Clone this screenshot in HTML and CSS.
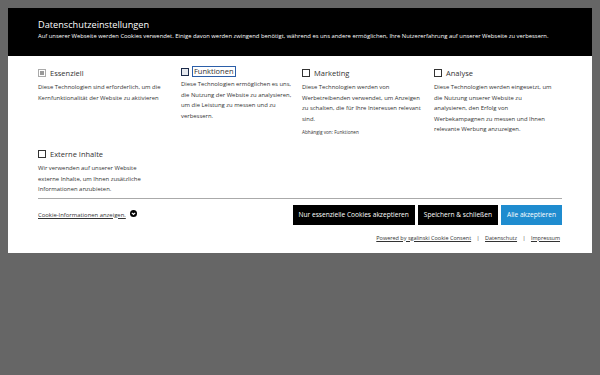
FILE: index.html
```html
<!DOCTYPE html>
<html>
<head>
<meta name="viewport" content="width=device-width, initial-scale=1">
<link rel="stylesheet" href="styles.css">
</head>
<body>

<div class="consent">
  <div class="consent_head">
    <h2>Datenschutzeinstellungen</h2>
    <p>Auf unserer Webseite werden Cookies verwendet. Einige davon werden zwingend benötigt, während es uns andere ermöglichen, Ihre Nutzererfahrung auf unserer Webseite zu verbessern.</p>
  </div>

  <div class="consent_body">
    <div class="options">
      <div class="option">
        <label class="opt_label"><span class="box box_disabled"></span>Essenziell</label>
        <p>Diese Technologien sind erforderlich, um die Kernfunktionalität der Website zu aktivieren</p>
      </div>
      <div class="option">
        <label class="opt_label focus"><span class="box box_focus"></span><span class="outline">Funktionen</span></label>
        <p>Diese Technologien ermöglichen es uns, die Nutzung der Website zu analysieren, um die Leistung zu messen und zu verbessern.</p>
      </div>
      <div class="option">
        <label class="opt_label"><span class="box"></span>Marketing</label>
        <p>Diese Technologien werden von Werbetreibenden verwendet, um Anzeigen zu schalten, die für Ihre Interessen relevant sind.</p>
        <p class="depends">Abhängig von: Funktionen</p>
      </div>
      <div class="option">
        <label class="opt_label"><span class="box"></span>Analyse</label>
        <p>Diese Technologien werden eingesetzt, um die Nutzung unserer Website zu analysieren, den Erfolg von Werbekampagnen zu messen und Ihnen relevante Werbung anzuzeigen.</p>
      </div>
      <div class="option option_narrow">
        <label class="opt_label"><span class="box"></span>Externe Inhalte</label>
        <p>Wir verwenden auf unserer Website externe Inhalte, um Ihnen zusätzliche Informationen anzubieten.</p>
      </div>
    </div>

    <div class="consent_foot">
      <a class="details_link" href="#">Cookie-Informationen anzeigen.</a>
      <svg class="chevron" width="7" height="7" viewBox="0 0 14 14">
        <circle cx="7" cy="7" r="7" fill="#000"/>
        <path d="M3.6 5.6 L7 9 L10.4 5.6" fill="none" stroke="#fff" stroke-width="2.2"/>
      </svg>
      <div class="buttons">
        <button class="btn">Nur essenzielle Cookies akzeptieren</button>
        <button class="btn">Speichern &amp; schließen</button>
        <button class="btn btn_blue">Alle akzeptieren</button>
      </div>
    </div>

    <div class="links">
      <a href="#">Powered by sgalinski Cookie Consent</a>
      <span class="sep">|</span>
      <a href="#">Datenschutz</a>
      <span class="sep">|</span>
      <a href="#">Impressum</a>
    </div>
  </div>
</div>

</body>
</html>
```

FILE: styles.css
```css
html, body {
    margin: 0;
    height: 100%;
}

body {
    background-color: #666;
    font-family: "Open Sans", Arial, sans-serif;
    padding: 8px;
    box-sizing: border-box;
}

.consent {
    width: 584px;
    background-color: #fff;
}

.consent_head {
    background-color: #000;
    color: #fff;
    height: 48px;
    box-sizing: border-box;
    padding: 10px 30px 0;
}

.consent_head h2 {
    margin: 0;
    font-size: 9.2px;
    font-weight: normal;
    line-height: 13px;
}

.consent_head p {
    margin: 0;
    font-size: 5.85px;
    line-height: 10px;
}

.consent_body {
    padding: 11px 30px 11px;
}

.options {
    display: grid;
    grid-template-columns: 143px 121px 132px 1fr;
    row-gap: 12px;
    border-bottom: 1px solid #aaa;
    padding-bottom: 3px;
}

.option p {
    margin: 3px 0 0;
    font-size: 5.9px;
    line-height: 10.5px;
    color: #333;
    padding-right: 10px;
}

.option_narrow p {
    width: 104px;
    padding-right: 0;
}

.opt_label {
    display: flex;
    align-items: center;
    font-size: 7.5px;
    line-height: 12px;
    color: #333;
}

.box {
    width: 6px;
    height: 6px;
    border: 1px solid #333;
    margin-right: 4px;
}

.box_disabled {
    border-color: #aaa;
    background-color: #fff;
    box-shadow: inset 0 0 0 1px #fff, inset 0 0 0 3px #999;
}

.box_focus {
    border-color: #1c2b4a;
    background-color: #e6e9ee;
}

.outline {
    outline: 1px solid #2b5ea8;
    padding: 0 1px;
    line-height: 9px;
}

.option .depends {
    font-size: 4.7px;
    line-height: 8px;
    margin-top: 4px;
}

.consent_foot {
    display: flex;
    align-items: center;
    margin-top: 6px;
}

.details_link {
    font-size: 5.9px;
    color: #333;
}

.chevron {
    margin-left: 4px;
    margin-top: -3px;
}

.buttons {
    margin-left: auto;
    display: flex;
    gap: 3px;
}

.btn {
    background-color: #000;
    color: #fff;
    border: none;
    font-family: "Open Sans", Arial, sans-serif;
    font-size: 6.6px;
    height: 20px;
    padding: 0 6px;
    cursor: pointer;
}

.btn_blue {
    background-color: #1f8ccf;
}

.links {
    text-align: right;
    font-size: 5.5px;
    line-height: 8px;
    margin-top: 9px;
    padding-right: 2px;
    color: #333;
}

.links a {
    color: #333;
}

.sep {
    margin: 0 4px;
}
```
